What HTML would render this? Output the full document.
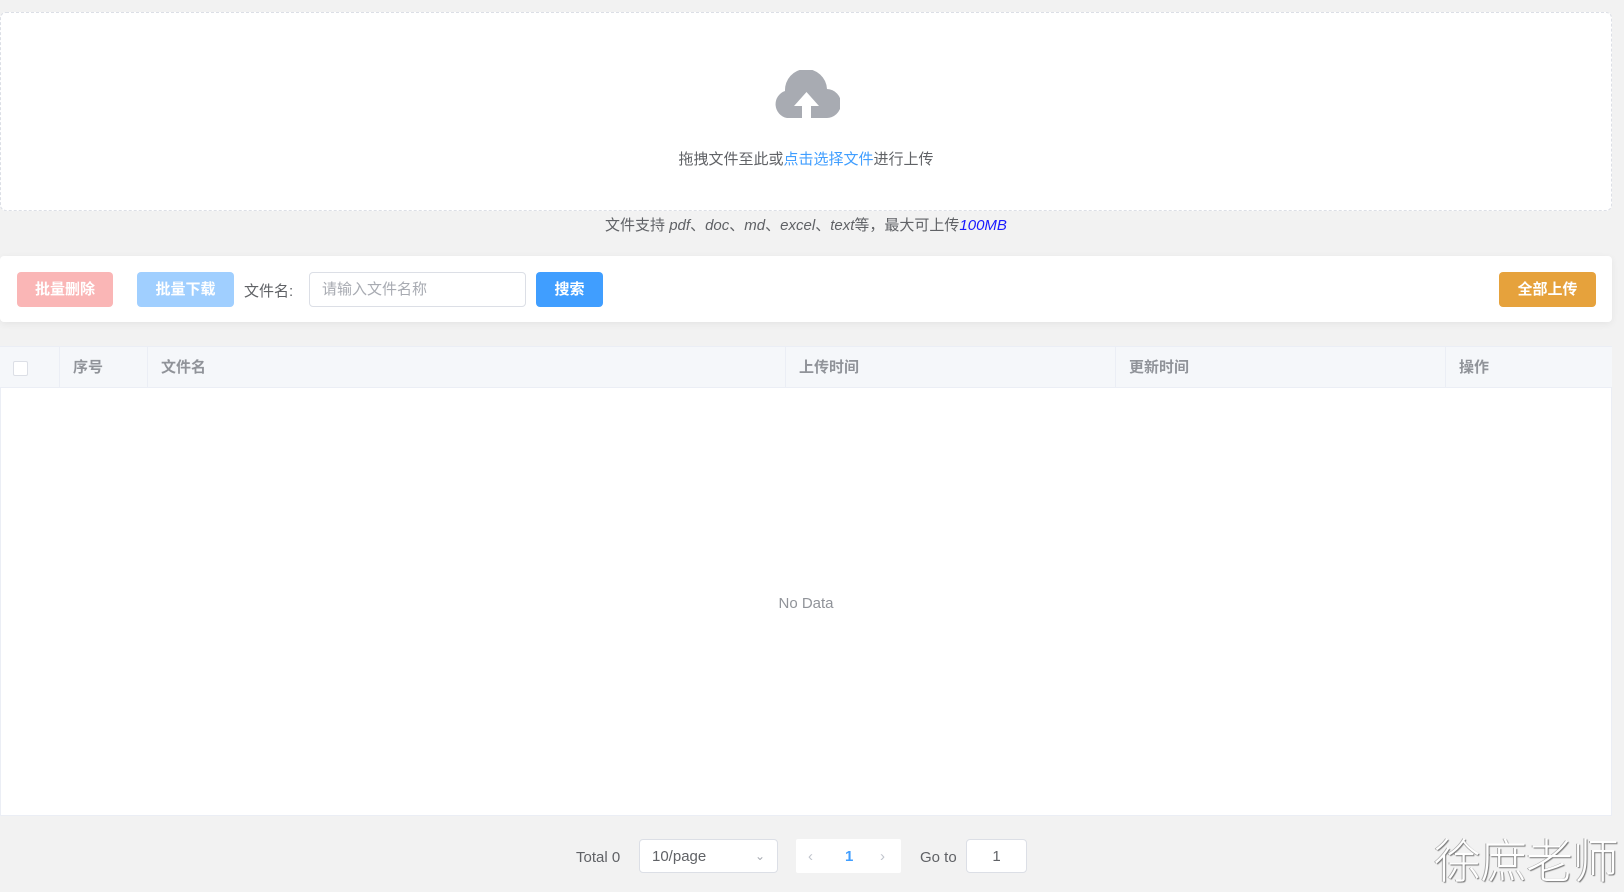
<!DOCTYPE html>
<html><head><meta charset="utf-8"><style>
*{box-sizing:border-box;margin:0;padding:0}
body{width:1624px;height:882px;background:#f2f2f2;font-family:"Liberation Sans","Noto Sans CJK SC",sans-serif;position:relative;overflow:hidden;font-size:15px;color:#606266}
.abs{position:absolute}
.upload{left:0;top:12px;width:1612px;height:199px;background:#fff;border:1px dashed #dcdfe6;border-radius:6px}
.btn{position:absolute;top:272px;height:35px;border-radius:4px;color:#fff;font-weight:bold;font-size:15px;line-height:36px;text-align:center}
.th{position:absolute;top:347px;height:41px;line-height:42px;font-weight:bold;color:#909399;border-right:1px solid #ebeef5;padding-left:13px}
</style></head><body>
<div class="abs upload"></div>
<svg class="abs" style="left:773px;top:70px" width="67" height="48" viewBox="0 0 67 48"><path d="M14 48 A14 14 0 0 1 12 21 A21 21 0 0 1 54 19 A14.5 14.5 0 0 1 53 48 Z" fill="#a8abb2"/><path d="M33.5 22 L21 36 H29 V48 H38 V36 H46 Z" fill="#fff"/></svg>
<div class="abs" style="left:0;width:1612px;top:148px;text-align:center;color:#606266">拖拽文件至此或<span style="color:#409eff">点击选择文件</span>进行上传</div>
<div class="abs" style="left:0;width:1612px;top:214px;text-align:center;color:#606266">文件支持 <i>pdf</i>、<i>doc</i>、<i>md</i>、<i>excel</i>、<i>text</i>等，最大可上传<i style="color:#1a1aff">100MB</i></div>
<div class="abs" style="left:0;top:256px;width:1612px;height:66px;background:#fff;border-radius:4px;box-shadow:0 2px 8px rgba(0,0,0,.06)"></div>
<div class="btn" style="left:17px;width:96px;background:#fab6b6">批量删除</div>
<div class="btn" style="left:137px;width:97px;background:#a0cfff">批量下载</div>
<div class="abs" style="left:244px;top:280px">文件名:</div>
<div class="abs" style="left:309px;top:272px;width:217px;height:35px;border:1px solid #dcdfe6;border-radius:4px;padding-left:12px;line-height:34px;color:#a8abb2">请输入文件名称</div>
<div class="btn" style="left:536px;width:67px;background:#409eff">搜索</div>
<div class="btn" style="left:1499px;width:97px;background:#e6a23c">全部上传</div>
<div class="abs" style="left:0;top:346px;width:1612px;height:470px;background:#fff;border:1px solid #ebeef5"></div>
<div class="abs" style="left:0;top:347px;width:1612px;height:41px;background:#f5f7fa;border-bottom:1px solid #ebeef5"></div>
<div class="th" style="left:0;width:60px"><span style="display:inline-block;width:15px;height:15px;border:1px solid #dcdfe6;border-radius:2px;background:#fff;vertical-align:middle"></span></div>
<div class="th" style="left:60px;width:88px">序号</div>
<div class="th" style="left:148px;width:638px">文件名</div>
<div class="th" style="left:786px;width:330px">上传时间</div>
<div class="th" style="left:1116px;width:330px">更新时间</div>
<div class="th" style="left:1446px;width:166px;border-right:none">操作</div>
<div class="abs" style="left:0;width:1612px;top:595px;text-align:center;color:#909399">No Data</div>
<div class="abs" style="left:576px;top:849px">Total 0</div>
<div class="abs" style="left:639px;top:839px;width:139px;height:34px;background:#fff;border:1px solid #dcdfe6;border-radius:4px;padding-left:12px;line-height:33px">10/page<span style="position:absolute;right:12px;color:#a8abb2;font-size:12px">&#8964;</span></div>
<div class="abs" style="left:796px;top:839px;width:105px;height:34px;background:#fff;border-radius:2px;line-height:35px;font-size:15px">
<span class="abs" style="left:12px;color:#c0c4cc">&lsaquo;</span><span class="abs" style="left:49px;color:#409eff;font-weight:bold">1</span><span class="abs" style="left:84px;color:#c0c4cc">&rsaquo;</span></div>
<div class="abs" style="left:920px;top:849px">Go to</div>
<div class="abs" style="left:966px;top:839px;width:61px;height:34px;background:#fff;border:1px solid #dcdfe6;border-radius:4px;text-align:center;line-height:33px">1</div>
<div class="abs" style="left:1434px;top:823px;font-size:47px;color:#fff;text-shadow:1px 1px 1px #777,-1px 0 0 #aaa;font-family:'Noto Sans CJK SC',sans-serif;font-weight:300;letter-spacing:-1px">徐庶老师</div>
</body></html>
